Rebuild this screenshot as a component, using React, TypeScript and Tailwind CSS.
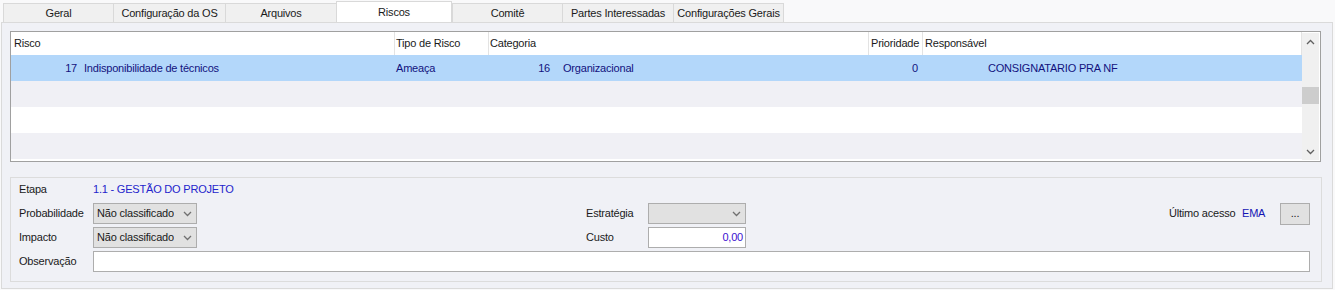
import React from "react";

const tabs = [
  { label: "Geral", w: "w-[110px]" },
  { label: "Configuração da OS", w: "w-[112px]" },
  { label: "Arquivos", w: "w-[111px]" },
  { label: "Riscos", w: "w-[116px]", active: true },
  { label: "Comitê", w: "w-[110px]" },
  { label: "Partes Interessadas", w: "w-[111px]" },
  { label: "Configurações Gerais", w: "w-[111px]" },
];

// chevron pequeno usado nos combos e na barra de rolagem
function Chevron({ up = false, color = "#707070" }) {
  return (
    <svg width="9" height="6" viewBox="0 0 9 6">
      <polyline
        points={up ? "1,5 4.5,1.5 8,5" : "1,1 4.5,4.5 8,1"}
        fill="none"
        stroke={color}
        strokeWidth="1.3"
      />
    </svg>
  );
}

function Combo({ value = "", w }: { value?: string; w: string }) {
  return (
    <div
      className={`${w} h-[21px] border border-[#adadad] bg-[#e1e1e1] flex items-center justify-between pl-[3px] pr-[4px]`}
    >
      <span className="truncate">{value}</span>
      <Chevron />
    </div>
  );
}

export default function App() {
  return (
    <div className="w-[1335px] h-[290px] bg-[#f9f9fa] text-[#1a1a1a] font-['Liberation_Sans',Arial,sans-serif] text-[11px] tracking-[-0.2px] overflow-hidden">
      {/* abas */}
      <div className="flex items-end h-[22px] pl-[3px]">
        {tabs.map((t, i) => (
          <div
            key={t.label}
            className={`${t.w} flex items-center justify-center border-t border-l border-[#d9d9d9] ${
              t.active ? "h-[21px] bg-white border-r" : "h-[19px] bg-[#f0f0f0]"
            } ${i === tabs.length - 1 ? "border-r" : ""}`}
          >
            {t.label}
          </div>
        ))}
      </div>

      {/* painel da aba Riscos */}
      <div className="ml-[1px] w-[1332px] h-[267px] border border-[#dadada] bg-[#f0f1f6] pl-[8px] pt-[8px]">
        {/* grade de riscos */}
        <div className="w-[1311px] h-[131px] border border-[#a0a0a0] bg-white flex">
          <div className="w-[1291px] flex flex-col">
            <div className="h-[23px] flex items-stretch">
              <div className="w-[383px] pl-[3px] flex items-center">Risco</div>
              <div className="w-[94px] pl-[1px] border-l border-[#e3e3e3] flex items-center">Tipo de Risco</div>
              <div className="w-[380px] pl-[1px] border-l border-[#e3e3e3] flex items-center">Categoria</div>
              <div className="w-[54px] pl-[2px] border-l border-[#e3e3e3] flex items-center">Prioridade</div>
              <div className="flex-1 pl-[2px] border-l border-[#e3e3e3] border-r flex items-center">Responsável</div>
            </div>
            <div className="h-[26px] bg-[#b3d7fa] text-[#12127e] flex items-center">
              <div className="w-[67px] text-right pr-[1px]">17</div>
              <div className="w-[316px] pl-[6px]">Indisponibilidade de técnicos</div>
              <div className="w-[94px] pl-[2px]">Ameaça</div>
              <div className="w-[62px] text-right">16</div>
              <div className="w-[318px] pl-[13px]">Organizacional</div>
              <div className="w-[50px] text-right">0</div>
              <div className="flex-1 pl-[70px]">CONSIGNATARIO PRA NF</div>
            </div>
            <div className="h-[26px] bg-[#f0f0f5]" />
            <div className="h-[26px] bg-white" />
            <div className="h-[26px] bg-[#f0f0f5]" />
          </div>
          {/* barra de rolagem */}
          <div className="w-[17px] my-[1px] bg-[#f0f0f0] flex flex-col">
            <div className="h-[17px] flex items-center justify-center">
              <Chevron up color="#606060" />
            </div>
            <div className="h-[37px]" />
            <div className="h-[17px] bg-[#cdcdcd]" />
            <div className="flex-1" />
            <div className="h-[17px] flex items-center justify-center">
              <Chevron color="#606060" />
            </div>
          </div>
        </div>

        {/* detalhes do risco */}
        <div className="mt-[15px] w-[1312px] h-[105px] border border-[#dcdcdc] pl-[8px] pr-[11px] pt-[1px] flex flex-col gap-[3px]">
          <div className="h-[21px] flex items-center">
            <span className="w-[74px]">Etapa</span>
            <span className="text-[#2424cc]">1.1 - GESTÃO DO PROJETO</span>
          </div>
          <div className="h-[21px] flex items-center">
            <span className="w-[74px]">Probabilidade</span>
            <Combo w="w-[104px]" value="Não classificado" />
            <div className="w-[389px]" />
            <span className="w-[62px]">Estratégia</span>
            <Combo w="w-[98px]" />
            <div className="ml-auto flex items-center">
              <span className="w-[73px]">Último acesso</span>
              <span className="w-[38px] text-[#1414b4]">EMA</span>
              <button className="w-[30px] h-[22px] border border-[#adadad] bg-[#e1e1e1] flex items-center justify-center">
                ...
              </button>
            </div>
          </div>
          <div className="h-[21px] flex items-center">
            <span className="w-[74px]">Impacto</span>
            <Combo w="w-[104px]" value="Não classificado" />
            <div className="w-[389px]" />
            <span className="w-[62px]">Custo</span>
            <div className="w-[98px] h-[21px] border border-[#adadad] bg-white flex items-center justify-end pr-[2px] text-[#3b10d0]">
              0,00
            </div>
          </div>
          <div className="h-[21px] flex items-center">
            <span className="w-[74px]">Observação</span>
            <div className="w-[1217px] h-[21px] border border-[#adadad] bg-white" />
          </div>
        </div>
      </div>
    </div>
  );
}
